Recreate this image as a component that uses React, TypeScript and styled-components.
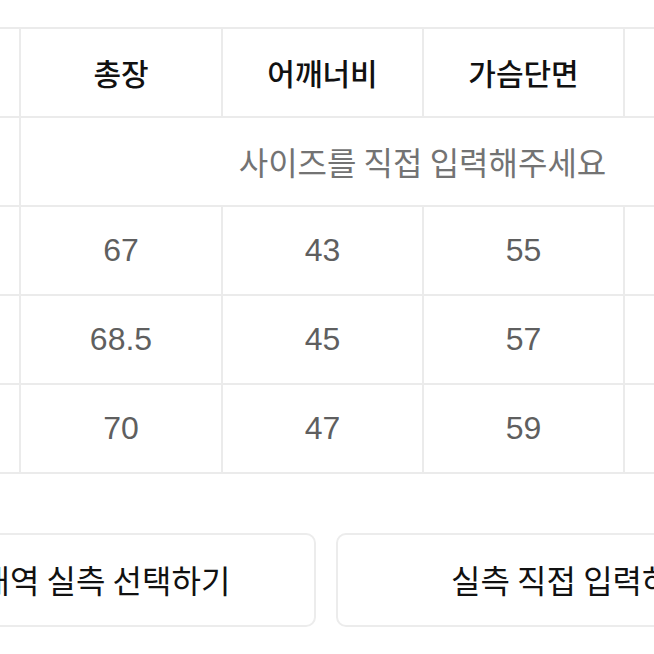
import React from "react";
import styled, { createGlobalStyle } from "styled-components";

const GlobalStyle = createGlobalStyle`
  html, body {
    margin: 0;
    padding: 0;
    background: #ffffff;
    overflow: hidden;
  }
  body {
    font-family: "Liberation Sans", "Noto Sans CJK KR", sans-serif;
  }
`;

const Page = styled.div`
  width: 1010px;
  margin-left: -182px;
  padding-top: 27px;
`;

const SizeGrid = styled.div`
  display: grid;
  grid-template-columns: 201px 202px 201px 201px 201px;
  grid-auto-rows: 89px;
  border-top: 2px solid #ebebeb;
  border-left: 2px solid #ebebeb;
  width: max-content;
`;

const Cell = styled.div<{ $span?: number; $kind?: "head" | "value" | "note" }>`
  box-sizing: border-box;
  grid-column: span ${(p) => p.$span ?? 1};
  border-right: 2px solid #ebebeb;
  border-bottom: 2px solid #ebebeb;
  display: flex;
  align-items: center;
  justify-content: center;
  white-space: nowrap;
  padding-bottom: ${(p) => (p.$kind === "value" ? "0" : "2px")};
  font-family: ${(p) =>
    p.$kind === "value"
      ? `"Liberation Sans", "Noto Sans CJK KR", sans-serif`
      : `"Noto Sans CJK KR", sans-serif`};
  font-size: ${(p) => (p.$kind === "value" ? "32px" : p.$kind === "note" ? "32px" : "30px")};
  font-weight: ${(p) => (p.$kind === "head" ? 500 : 400)};
  color: ${(p) => (p.$kind === "value" ? "#5f5f5f" : p.$kind === "note" ? "#737373" : "#111111")};
`;

const ButtonRow = styled.div`
  display: grid;
  grid-template-columns: 480px 480px;
  gap: 20px;
  margin-top: 59px;
  padding-left: 18px;
`;

const ActionButton = styled.button`
  box-sizing: border-box;
  height: 94px;
  border: 2px solid #ececec;
  border-radius: 10px;
  background: #ffffff;
  font-family: "Noto Sans CJK KR", sans-serif;
  font-size: 32px;
  font-weight: 400;
  color: #111111;
  display: flex;
  align-items: center;
  justify-content: center;
  padding: 0 0 2px;
  white-space: nowrap;
`;

const headers = ["사이즈", "총장", "어깨너비", "가슴단면", "소매길이"];
const rows = [
  ["S", "67", "43", "55", "62"],
  ["M", "68.5", "45", "57", "63"],
  ["L", "70", "47", "59", "64"],
];

export default function App() {
  return (
    <>
      <GlobalStyle />
      <Page>
        <SizeGrid>
          {headers.map((h) => (
            <Cell key={h} $kind="head">
              {h}
            </Cell>
          ))}
          <Cell $kind="head">직접입력</Cell>
          <Cell $span={4} $kind="note">
            사이즈를 직접 입력해주세요
          </Cell>
          {rows.map((r) =>
            r.map((v, i) => (
              <Cell key={r[0] + i} $kind={i === 0 ? "head" : "value"}>
                {v}
              </Cell>
            ))
          )}
        </SizeGrid>
        <ButtonRow>
          <ActionButton>구매내역 실측 선택하기</ActionButton>
          <ActionButton>실측 직접 입력하기</ActionButton>
        </ButtonRow>
      </Page>
    </>
  );
}
